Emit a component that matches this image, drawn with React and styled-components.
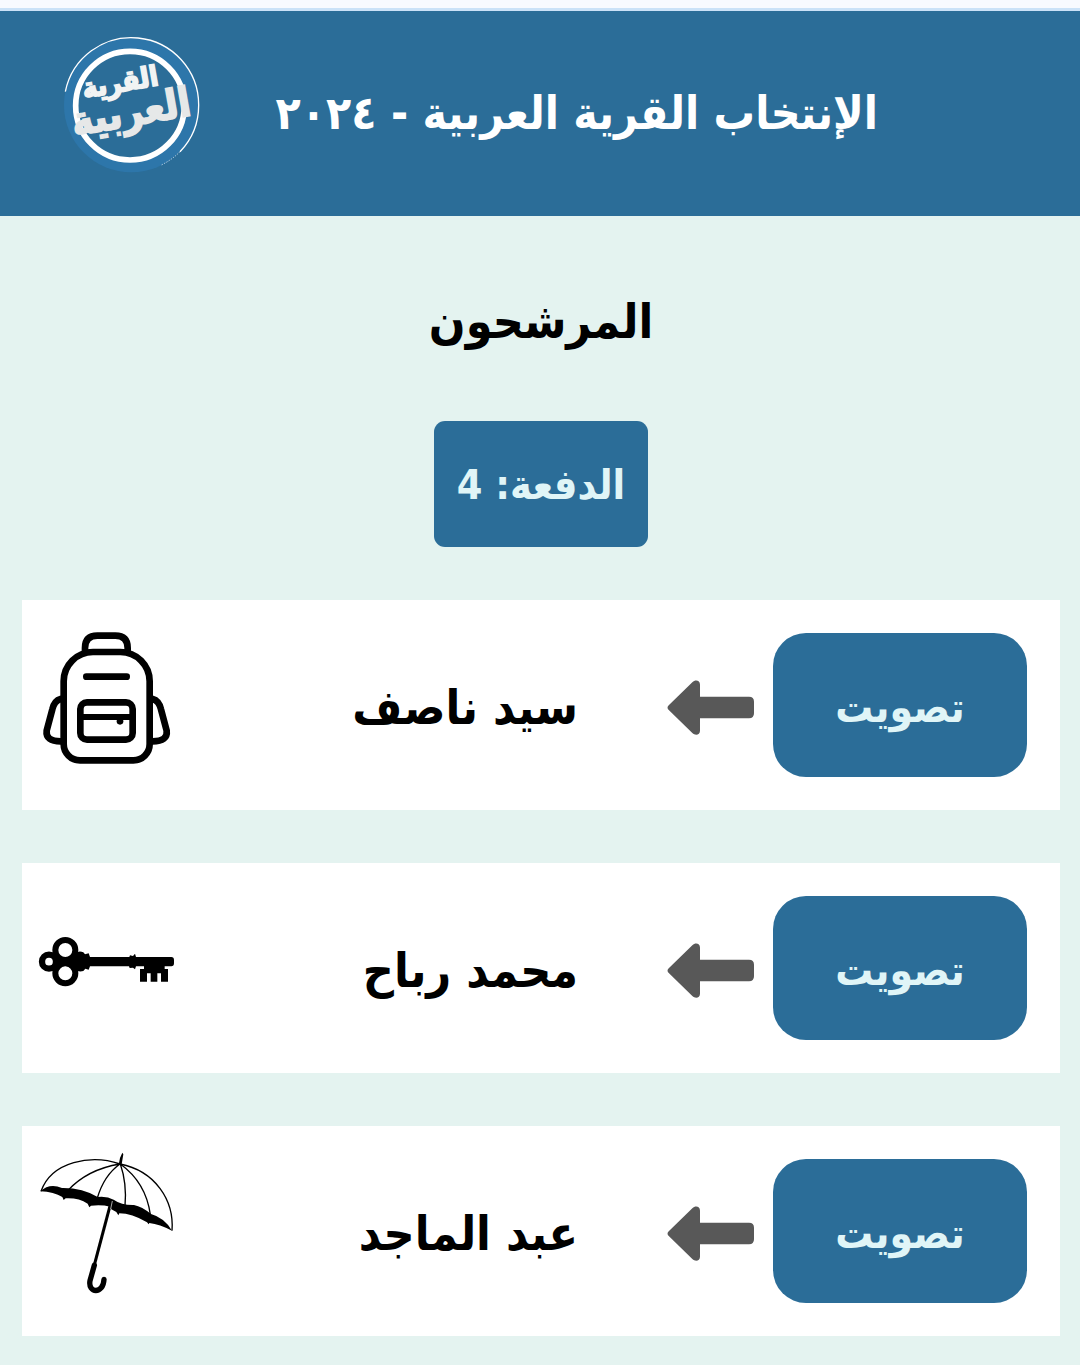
import React from "react";
import styled, { createGlobalStyle } from "styled-components";

const Global = createGlobalStyle`
  * { box-sizing: border-box; }
  body {
    margin: 0;
    background: #e4f3f0;
    color: #000;
    font-family: "DejaVu Sans Condensed", "DejaVu Sans", sans-serif;
    font-weight: 700;
  }
`;

const Page = styled.div`
  min-height: 100vh;
  display: flex;
  flex-direction: column;
`;

const TopStrip = styled.div`
  height: 11px;
  background: #f8faff;
  border-bottom: 3px solid #cbe2f8;
`;

const Header = styled.header`
  display: flex;
  align-items: flex-start;
  justify-content: space-between;
  height: 205px;
  padding: 24px 202px 0 62px;
  background: #2b6d98;
  color: #fff;
`;

const Title = styled.h1`
  margin: 0;
  padding-top: 48px;
  font-size: 46px;
  line-height: 60px;
  white-space: nowrap;
`;

const Logo = styled.svg`
  flex: none;
  width: 140px;
  height: 140px;
`;

const Main = styled.main`
  display: flex;
  flex-direction: column;
  align-items: center;
  padding: 75px 20px 28px 22px;
`;

const Heading = styled.h2`
  margin: 0 0 70px;
  font-size: 48px;
  line-height: 60px;
`;

const Batch = styled.div`
  display: flex;
  align-items: center;
  justify-content: center;
  width: 214px;
  height: 126px;
  padding-top: 2px;
  border-radius: 11px;
  background: #2b6d98;
  color: #e0f5f7;
  font-size: 41px;
  white-space: nowrap;
`;

const List = styled.ul`
  display: flex;
  flex-direction: column;
  gap: 53px;
  width: 100%;
  margin: 53px 0 0;
  padding: 0;
  list-style: none;
`;

const Card = styled.li`
  display: grid;
  grid-template-columns: 254px 88px 1fr 144px;
  column-gap: 18px;
  align-items: center;
  height: 210px;
  padding: 0 33px 0 12px;
  background: #fff;
`;

const VoteButton = styled.button`
  height: 144px;
  padding: 4px 0 0;
  border: 0;
  border-radius: 33px;
  background: #2b6d98;
  color: #e0f5f7;
  font: inherit;
  font-size: 42px;
  cursor: pointer;
`;

const Arrow = styled.svg`
  width: 88px;
  height: 56px;
  margin-top: 6px;
`;

const Name = styled.span`
  padding: 4px 71px 0 0;
  font-size: 48px;
  line-height: 60px;
  white-space: nowrap;
`;

const Symbol = styled.svg`
  width: 144px;
  height: 144px;
  margin-bottom: 14px;
`;

function VillageLogo() {
  return (
    <Logo viewBox="36 30 420 420" role="img" aria-label="القرية العربية">
      <circle cx="244" cy="240" r="202" fill="#2d76aa" />
      <path d="M46 200A202 202 0 0 1 446 240A202 202 0 0 1 390 380" fill="none" stroke="#fff" strokeWidth="4" />
      <path d="M390 380A202 202 0 0 1 334 420" fill="none" stroke="#fff" strokeWidth="2" strokeDasharray="4 4" />
      <circle cx="240" cy="242" r="163" fill="#2b6d98" stroke="#fff" strokeWidth="17" />
      <g fontFamily="DejaVu Sans Condensed, DejaVu Sans, sans-serif" fontWeight="700" textAnchor="middle" direction="rtl" strokeWidth="5">
        <text x="215" y="200" fontSize="84" fill="#f1f3f3" stroke="#f1f3f3" transform="rotate(-10 215 200)">القرية</text>
        <text x="250" y="302" fontSize="122" fill="#e6e8e8" stroke="#e6e8e8" transform="rotate(-10 250 302)">العربية</text>
      </g>
    </Logo>
  );
}

function Backpack() {
  return (
    <Symbol viewBox="42 78 432 432" fill="none" stroke="#000" strokeWidth="20" strokeLinecap="round" aria-hidden="true">
      <path d="M195 156V144Q195 107 232 107H286Q323 107 323 144V156" />
      <path d="M131 244A88 88 0 0 1 219 156H301A88 88 0 0 1 389 244V432A49 49 0 0 1 340 481H180A49 49 0 0 1 131 432Z" />
      <path d="M199 230H320" />
      <rect x="181" y="307" width="157" height="112" rx="20" />
      <path d="M181 351H338" strokeWidth="18" />
      <circle cx="300" cy="364" r="10" fill="#000" stroke="none" />
      <path d="M122 297Q103 302 97 328L80 392Q76 424 122 424M398 297Q417 302 423 328L440 392Q444 424 398 424" />
    </Symbol>
  );
}

function Key() {
  return (
    <Symbol viewBox="42 -33 432 432" aria-hidden="true">
      <g fill="none" stroke="#000">
        <circle cx="136" cy="150" r="30" strokeWidth="18" />
        <circle cx="136" cy="220" r="30" strokeWidth="18" />
        <circle cx="87" cy="185" r="21" strokeWidth="19" />
      </g>
      <path d="M102 166L118 168 136 173 162 164Q174 150 190 157L195 163 206 160 210 171H328L330 166 339 168 345 161 348 171H454Q462 171 462 180V190Q462 199 454 199H434V207H444V245H423V220H412V245H392V220H381V245H360V207H372V199H348L345 208 339 203 329 204 327 199H210L206 209 196 206 190 213Q175 218 163 206L136 197 118 202 102 204Z" />
    </Symbol>
  );
}

function Umbrella() {
  return (
    <Symbol viewBox="42 66 432 432" aria-hidden="true">
      <g fill="none" stroke="#000" strokeWidth="4">
        <path d="M63 184C95 94 214 72 300 102C406 123 463 211 456 302" />
        <path d="M300 102Q202 118 143 182M300 102Q252 136 232 204M301 102Q321 160 315 228M301 102Q378 158 391 254" />
      </g>
      <path d="M296 104L300 84 307 68 310 73 305 103ZM61 184Q89 158 126 174Q187 173 233 201Q261 198 281 209Q305 226 342 225Q366 230 393 252Q433 263 456 302Q419 283 388 279L386 283 381 277Q335 250 298 250L295 256 289 246 274 238 271 230Q244 223 213 227L208 232 203 221Q176 203 137 205L131 210 127 201Q102 186 61 184Z" />
      <path d="M272 220L223 405" fill="none" stroke="#000" strokeWidth="9" />
      <path d="M277 213L272 237" stroke="#fff" strokeWidth="2" />
      <path d="M223 406L210 452C203 490 250 494 252 448" fill="none" stroke="#000" strokeWidth="16" strokeLinecap="round" />
    </Symbol>
  );
}

const candidates = [
  { name: "سيد ناصف", Icon: Backpack },
  { name: "محمد رباح", Icon: Key },
  { name: "عبد الماجد", Icon: Umbrella },
];

export default function App() {
  return (
    <Page dir="rtl" lang="ar">
      <Global />
      <TopStrip />
      <Header>
        <Title>الإنتخاب القرية العربية - ٢٠٢٤</Title>
        <VillageLogo />
      </Header>
      <Main>
        <Heading>المرشحون</Heading>
        <Batch>الدفعة: 4</Batch>
        <List>
          {candidates.map(({ name, Icon }) => (
            <Card key={name}>
              <VoteButton type="button" aria-label={`تصويت ${name}`}>تصويت</VoteButton>
              <Arrow viewBox="84 182 264 168" fill="#585858" aria-hidden="true">
                <path d="M90 257L160 189C169 180 183 183 183 196V232H330Q345 232 345 247V282Q345 297 330 297H183V334C183 347 169 350 160 341L90 273Q81 265 90 257Z" />
              </Arrow>
              <Name>{name}</Name>
              <Icon />
            </Card>
          ))}
        </List>
      </Main>
    </Page>
  );
}
